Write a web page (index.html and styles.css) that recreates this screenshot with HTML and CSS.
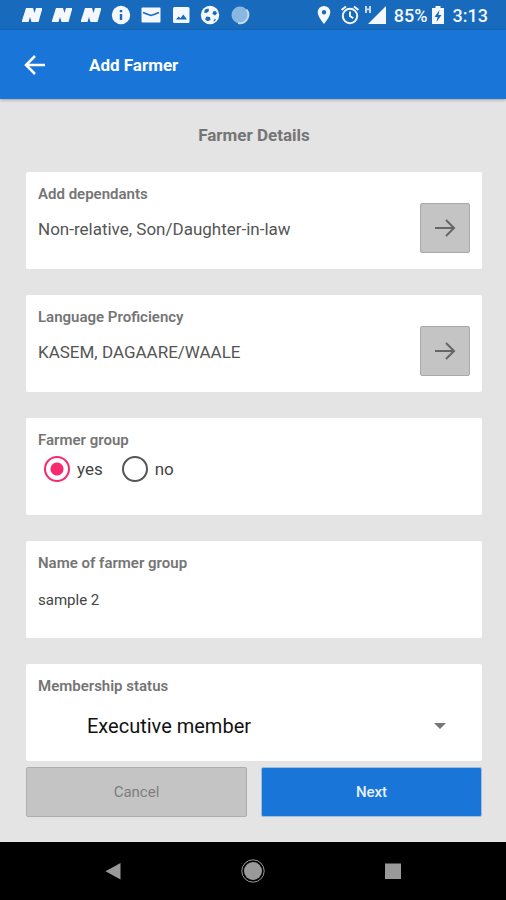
FILE: index.html
```html
<!DOCTYPE html>
<html lang="en">
<head>
<meta charset="utf-8">
<meta name="viewport" content="width=device-width, initial-scale=1">
<title>Add Farmer</title>
<link rel="stylesheet" href="styles.css">
</head>
<body>
<div class="statusbar">
  <div class="notifications">
    <svg class="icon" viewBox="0 0 20 20"><path d="M4 3h7l1.500 5L14 3h6.500l-4 14h-7L8 12l-1.500 5H-.5z"/></svg>
    <svg class="icon" viewBox="0 0 20 20"><path d="M4 3h7l1.500 5L14 3h6.500l-4 14h-7L8 12l-1.500 5H-.5z"/></svg>
    <svg class="icon" viewBox="0 0 20 20"><path d="M4 3h7l1.500 5L14 3h6.500l-4 14h-7L8 12l-1.500 5H-.5z"/></svg>
    <svg class="icon" viewBox="0 0 20 20"><circle cx="10" cy="10" r="9.2"/><path class="cut" d="M8.8 5h2.4v2.3H8.8zM8.8 9h2.4v6H8.8z"/></svg>
    <svg class="icon" viewBox="0 0 20 20"><rect x=".5" y="2.5" width="19" height="15" rx="1"/><path class="cut-line" d="M2 7.5l4.5 1.8L10 10.5l3.500-1.200L18 7.500"/></svg>
    <svg class="icon" viewBox="0 0 20 20"><rect x="2" y="2" width="16.500" height="16" rx="1.500"/><path class="cut" d="M5 14.500l2.500-3 2 1.800 2.800-3.800 3.700 5z"/></svg>
    <svg class="icon" viewBox="0 0 20 20"><circle cx="10" cy="10" r="9.200"/><path class="cut" d="M5 4.500l3.500-1 .5 2.500-2.500 2-2.500-.5zM13 6.500l3-.5 1 2.500-2 2-2.500-1.500zM6.500 11.500l3.500.5.500 3-3 1.200-2.500-2zM14 14.500l2-.5-1 2-1.500.5z"/></svg>
    <svg class="icon" viewBox="0 0 20 20"><circle class="dim" cx="10" cy="10" r="8.500"/><path class="arc" d="M16.500 4.500A8.500 8.500 0 0 1 8 18"/></svg>
  </div>
  <div class="system">
    <svg class="icon location" viewBox="0 0 20 20"><path fill-rule="evenodd" d="M10 1a6.300 6.300 0 0 0-6.300 6.300C3.700 12 10 19 10 19s6.300-7 6.300-11.700A6.300 6.300 0 0 0 10 1zm0 4a2.200 2.200 0 1 1 0 4.400A2.200 2.200 0 0 1 10 5z"/></svg>
    <svg class="icon" viewBox="0 0 20 20"><circle class="line" cx="10" cy="11" r="7.200"/><path class="line" d="M10 6.500V11l3.200 2.200M1.500 5L6 1.500M18.500 5L14 1.500"/></svg>
    <svg class="icon signal" viewBox="0 0 22 20"><path d="M22 1v18H4z"/><path class="faint" d="M1 1h2v2.500h2V1h2v7H5V5.200H3V8H1z"/></svg>
    <span class="percent">85%</span>
    <svg class="icon battery" viewBox="0 0 12 20"><path d="M3.500 1h5v2H12v16H0V3h3.500z"/><path class="cut" d="M7.500 5L2.500 12H5.500l-1 5 5-7H6.500z"/></svg>
    <span class="clock">3:13</span>
  </div>
</div>

<header class="appbar">
  <button class="back" type="button" aria-label="Back">
    <svg viewBox="0 0 24 24"><path d="M22 12H3M12 3l-9 9 9 9"/></svg>
  </button>
  <h1 class="title">Add Farmer</h1>
</header>

<form class="form">
  <h2 class="heading">Farmer Details</h2>

  <section class="card">
    <h3 class="label">Add dependants</h3>
    <p class="value">Non-relative, Son/Daughter-in-law</p>
    <button class="open" type="button" aria-label="Edit dependants">
      <svg viewBox="0 0 24 24"><path d="M2 12h19M13 4l8 8-8 8"/></svg>
    </button>
  </section>

  <section class="card">
    <h3 class="label">Language Proficiency</h3>
    <p class="value">KASEM, DAGAARE/WAALE</p>
    <button class="open" type="button" aria-label="Edit languages">
      <svg viewBox="0 0 24 24"><path d="M2 12h19M13 4l8 8-8 8"/></svg>
    </button>
  </section>

  <section class="card" role="radiogroup" aria-labelledby="group-label">
    <h3 class="label" id="group-label">Farmer group</h3>
    <div class="choices">
      <label class="choice"><input class="radio" type="radio" name="group" checked>yes</label>
      <label class="choice"><input class="radio" type="radio" name="group">no</label>
    </div>
  </section>

  <section class="card">
    <label class="label" for="group-name">Name of farmer group</label>
    <input class="text" id="group-name" type="text" value="sample 2">
  </section>

  <section class="card">
    <label class="label" for="status">Membership status</label>
    <div class="dropdown">
      <select class="select" id="status"><option>Executive member</option></select>
    </div>
  </section>

  <div class="actions">
    <button class="action cancel" type="button">Cancel</button>
    <button class="action next" type="submit">Next</button>
  </div>
</form>

<nav class="navbar">
  <button class="key" type="button" aria-label="Back"><svg viewBox="0 0 24 24"><path d="M19.500 4v16.500L4.500 12.200z"/></svg></button>
  <button class="key" type="button" aria-label="Home"><svg viewBox="0 0 24 24"><circle cx="12" cy="12" r="9"/><circle class="ring" cx="12" cy="12" r="11.200"/></svg></button>
  <button class="key" type="button" aria-label="Recent apps"><svg viewBox="0 0 24 24"><path d="M4 4.500h16v15.500H4z"/></svg></button>
</nav>
</body>
</html>
```
FILE: styles.css
```css
* {
  box-sizing: border-box;
}

body {
  margin: 0;
  min-height: 100vh;
  display: flex;
  flex-direction: column;
  background: #e4e4e4;
  font-family: Roboto, "Liberation Sans", sans-serif;
}

h1, h2, h3, p {
  margin: 0;
}

button, input, select {
  font-family: inherit;
}

button {
  padding: 0;
  border: 0;
  background: none;
}

/* Status bar */
.statusbar {
  height: 30px;
  padding: 0 18px 0 22px;
  display: flex;
  align-items: center;
  justify-content: space-between;
  background: #176abc;
  color: #f4f8fc;
  font-size: 18px;
  font-weight: 500;
}

.notifications {
  width: 228px;
  display: flex;
  justify-content: space-between;
}

.system {
  display: flex;
  align-items: center;
  gap: 4px;
}

.icon {
  width: 20px;
  height: 20px;
  fill: #f4f8fc;
}

.location {
  margin-right: 2px;
}

.signal {
  width: 22px;
}

.battery {
  width: 12px;
}

.percent {
  margin-left: 4px;
}

.clock {
  margin-left: 5px;
}

.cut {
  fill: #176abc;
}

.cut-line {
  fill: none;
  stroke: #176abc;
  stroke-width: 1.5;
}

.line {
  fill: none;
  stroke: #f4f8fc;
  stroke-width: 2;
}

.faint {
  fill: #c3daf0;
}

.dim {
  fill: #8ab6e2;
}

.arc {
  fill: none;
  stroke: #c3daf0;
  stroke-width: 2;
}

/* App bar */
.appbar {
  height: 69px;
  padding-left: 23px;
  display: flex;
  align-items: center;
  gap: 42px;
  background: #1976d8;
  color: #fff;
  box-shadow: 0 1px 3px rgba(0, 0, 0, 0.3);
}

.back,
.back svg {
  width: 24px;
  height: 24px;
  display: block;
}

.back svg {
  fill: none;
  stroke: #fff;
  stroke-width: 2.5;
}

.title {
  font-size: 17px;
  font-weight: 700;
}

/* Form */
.form {
  flex: 1;
  padding: 0 24px 25px 26px;
  display: flex;
  flex-direction: column;
}

.heading {
  height: 73px;
  line-height: 73px;
  color: #757575;
  font-size: 17px;
  font-weight: 700;
  text-align: center;
}

.card {
  min-height: 97px;
  margin-bottom: 26px;
  padding: 12px;
  display: grid;
  grid-template-columns: 1fr auto;
  grid-template-rows: 20px auto;
  align-content: start;
  background: #fff;
  border-radius: 2px;
}

.label {
  grid-column: 1;
  color: #757575;
  font-size: 15px;
  font-weight: 600;
  line-height: 20px;
}

.value {
  grid-column: 1;
  padding-top: 13px;
  color: #555;
  font-size: 17px;
  line-height: 24px;
}

.open {
  grid-column: 2;
  grid-row: 1 / 3;
  width: 50px;
  height: 50px;
  margin-top: 19px;
  display: grid;
  place-items: center;
  background: #c4c4c4;
  border: 1px solid #a9a9a9;
  border-radius: 2px;
}

.open svg {
  width: 24px;
  height: 24px;
  fill: none;
  stroke: #666;
  stroke-width: 2;
}

.choices {
  grid-column: 1 / 3;
  display: flex;
  gap: 19px;
  padding: 6px 6px 0;
}

.choice {
  display: flex;
  align-items: center;
  gap: 7px;
  color: #444;
  font-size: 17px;
  line-height: 26px;
}

.radio {
  appearance: none;
  width: 26px;
  height: 26px;
  margin: 0;
  border: 2px solid #555;
  border-radius: 50%;
}

.radio:checked {
  border-color: #f7296f;
  background: radial-gradient(circle, #f7296f 6px, transparent 7px);
}

.text {
  grid-column: 1 / 3;
  width: 100%;
  height: 53px;
  padding: 0;
  border: 0;
  background: none;
  color: #444;
  font-size: 15px;
}

.dropdown {
  grid-column: 1 / 3;
  display: grid;
  grid-template-columns: 1fr 12px;
  align-items: center;
  padding: 0 24px 0 49px;
}

.dropdown::after {
  content: "";
  grid-area: 1 / 2;
  height: 6px;
  background: #757575;
  clip-path: polygon(0 0, 100% 0, 50% 100%);
  pointer-events: none;
}

.select {
  grid-area: 1 / 1 / 2 / 3;
  appearance: none;
  height: 60px;
  padding: 0;
  border: 0;
  background: none;
  color: #111;
  font-size: 20px;
}

.card:nth-last-child(2) {
  padding-bottom: 5px;
  margin-bottom: 6px;
}

.actions {
  display: grid;
  grid-template-columns: 1fr 1fr;
  gap: 14px;
}

.action {
  height: 50px;
  border-radius: 2px;
  font-size: 15px;
  font-weight: 500;
}

.cancel {
  background: #c4c4c4;
  border: 1px solid #adadad;
  color: #7d7d7d;
  font-weight: 400;
}

.next {
  background: #1976d8;
  border: 1px solid #9dbfe2;
  color: #e8f2fc;
}

/* System keys */
.navbar {
  height: 58px;
  padding: 0 43px;
  display: grid;
  grid-template-columns: repeat(3, 1fr);
  background: #000;
}

.key {
  display: grid;
  place-items: center;
}

.key svg {
  width: 24px;
  height: 24px;
  fill: #999;
}

.ring {
  fill: none;
  stroke: #999;
  stroke-width: 1;
}
```
